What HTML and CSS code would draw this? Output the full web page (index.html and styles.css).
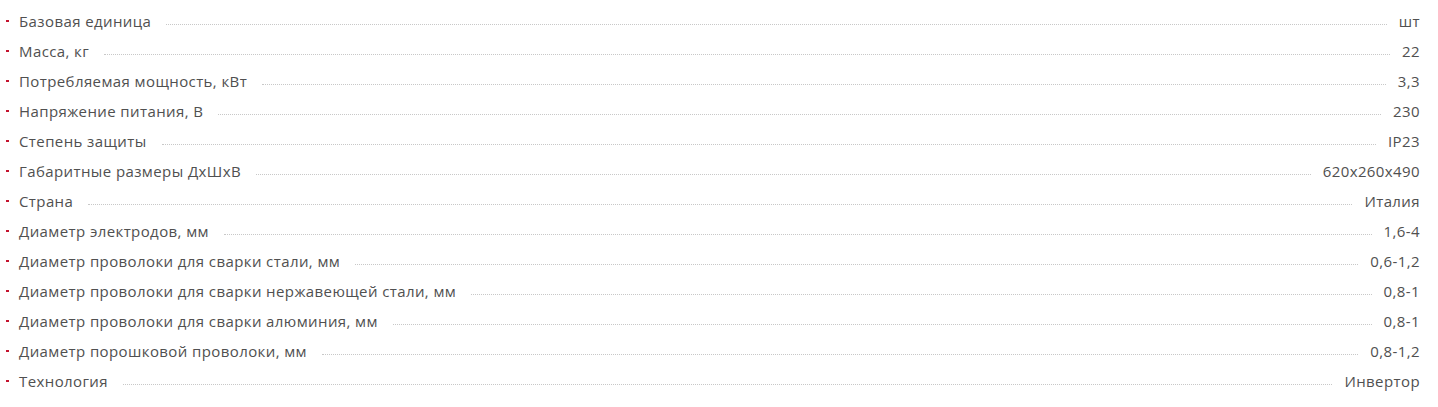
FILE: index.html
```html
<!DOCTYPE html>
<html lang="ru">
<head>
<meta charset="utf-8">
<link rel="stylesheet" href="styles.css">
</head>
<body>
<ul class="specs">
  <li class="row"><span class="label">Базовая единица</span><span class="dots"></span><span class="value">шт</span></li>
  <li class="row"><span class="label">Масса, кг</span><span class="dots"></span><span class="value">22</span></li>
  <li class="row"><span class="label">Потребляемая мощность, кВт</span><span class="dots"></span><span class="value">3,3</span></li>
  <li class="row"><span class="label">Напряжение питания, В</span><span class="dots"></span><span class="value">230</span></li>
  <li class="row"><span class="label">Степень защиты</span><span class="dots"></span><span class="value">IP23</span></li>
  <li class="row"><span class="label">Габаритные размеры ДхШхВ</span><span class="dots"></span><span class="value">620x260x490</span></li>
  <li class="row"><span class="label">Страна</span><span class="dots"></span><span class="value">Италия</span></li>
  <li class="row"><span class="label">Диаметр электродов, мм</span><span class="dots"></span><span class="value">1,6-4</span></li>
  <li class="row"><span class="label">Диаметр проволоки для сварки стали, мм</span><span class="dots"></span><span class="value">0,6-1,2</span></li>
  <li class="row"><span class="label">Диаметр проволоки для сварки нержавеющей стали, мм</span><span class="dots"></span><span class="value">0,8-1</span></li>
  <li class="row"><span class="label">Диаметр проволоки для сварки алюминия, мм</span><span class="dots"></span><span class="value">0,8-1</span></li>
  <li class="row"><span class="label">Диаметр порошковой проволоки, мм</span><span class="dots"></span><span class="value">0,8-1,2</span></li>
  <li class="row"><span class="label">Технология</span><span class="dots"></span><span class="value">Инвертор</span></li>
</ul>
</body>
</html>
```
FILE: styles.css
```css
html, body {
  margin: 0;
  padding: 0;
  background: #fff;
}
body {
  font-family: "Open Sans", "Noto Sans", sans-serif;
  font-size: 15px;
  letter-spacing: 0.4px;
  color: #505050;
}
.specs {
  list-style: none;
  margin: 0;
  padding: 6px 18px 0 6px;
}
.row {
  display: flex;
  align-items: center;
  height: 30px;
}
.row::before {
  content: "";
  width: 3px;
  height: 2px;
  background: #c4142f;
  margin-right: 10px;
  flex: none;
}
.label {
  flex: none;
}
.dots {
  flex: 1;
  align-self: flex-start;
  margin: 18px 12px 0 15px;
  border-bottom: 1px dotted #c8c8c8;
}
.value {
  flex: none;
}
```
